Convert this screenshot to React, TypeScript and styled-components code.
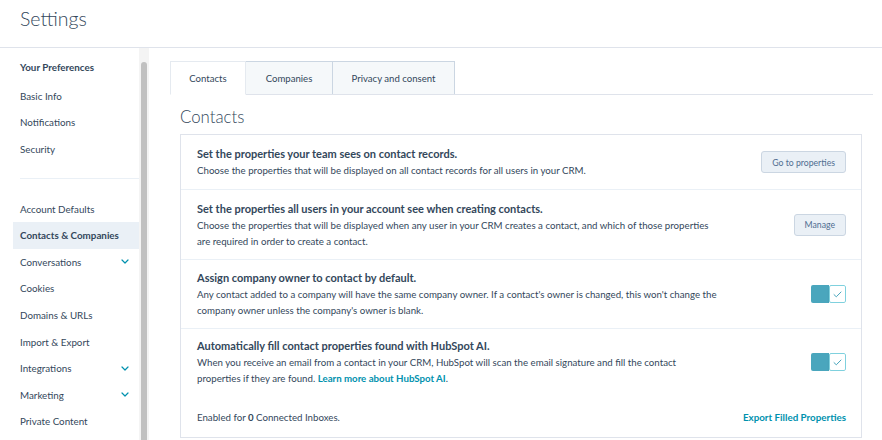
import React from "react";
import styled, { createGlobalStyle } from "styled-components";

const Global = createGlobalStyle`
  html, body { margin: 0; padding: 0; background: #fff; }
  body { font-family: Lato, "Open Sans", sans-serif; color: #33475b; -webkit-font-smoothing: antialiased; }
  * { box-sizing: border-box; }
`;

const Page = styled.div`
  width: 882px;
  height: 440px;
  overflow: hidden;
  display: flex;
  flex-direction: column;
`;

const Header = styled.header`
  height: 48px;
  border-bottom: 1px solid #dfe3eb;
  padding: 6px 0 0 20px;
`;

const Title = styled.h1`
  margin: 0;
  font-size: 19.5px;
  font-weight: 300;
  color: #33475b;
  line-height: 26px;
`;

const Body = styled.div`
  flex: 1;
  display: flex;
  min-height: 0;
`;

const Sidebar = styled.nav`
  width: 139px;
  padding: 6px 0 0 13px;
  display: flex;
  flex-direction: column;
`;

const NavItem = styled.div<{ $active?: boolean; $heading?: boolean }>`
  height: 26.6px;
  flex-shrink: 0;
  display: flex;
  align-items: center;
  justify-content: space-between;
  padding: 0 10px 0 7px;
  font-size: 9.8px;
  font-weight: ${(p) => (p.$active || p.$heading ? 700 : 400)};
  color: #33475b;
  background: ${(p) => (p.$active ? "#eaf0f6" : "transparent")};
  margin-bottom: ${(p) => (p.$heading ? "2px" : "0")};
  white-space: nowrap;
`;

const Divider = styled.div`
  height: 1px;
  flex-shrink: 0;
  background: #eaf0f6;
  margin: 16px 0 16px 7px;
`;

const Chevron = () => (
  <svg width="8" height="5" viewBox="0 0 8 5">
    <path d="M1 1l3 3 3-3" fill="none" stroke="#0091ae" strokeWidth="1.2" strokeLinecap="round" strokeLinejoin="round" />
  </svg>
);

const Scroll = styled.div`
  width: 10px;
  padding: 14px 2px 0;
  background: #f4f4f4;
  display: flex;
`;

const Thumb = styled.div`
  flex: 1;
  background: #c1c1c1;
  border-radius: 3px 3px 0 0;
`;

const Main = styled.main`
  flex: 1;
  padding: 13px 20px 0 21px;
  display: flex;
  flex-direction: column;
`;

const Tabs = styled.div`
  display: flex;
  height: 34px;
  margin-right: -11px;
  border-bottom: 1px solid #dfe3eb;
`;

const Tab = styled.div<{ $active?: boolean; $w: number }>`
  width: ${(p) => p.$w}px;
  display: flex;
  align-items: center;
  justify-content: center;
  font-size: 9.6px;
  color: #33475b;
  background: ${(p) => (p.$active ? "#fff" : "#f5f8fa")};
  border: 1px solid ${(p) => (p.$active ? "#e5eaf0" : "#cbd6e2")};
  border-left-width: ${(p) => (p.$active ? "1px" : "0")};
  border-bottom: ${(p) => (p.$active ? "1px solid #fff" : "none")};
  margin-bottom: ${(p) => (p.$active ? "-1px" : "0")};
`;

const Heading = styled.h2`
  margin: 7px 0 0 10px;
  font-size: 16.8px;
  font-weight: 300;
  color: #33475b;
  height: 30px;
  line-height: 30px;
`;

const Card = styled.div`
  margin: 2px 0 0 10px;
  border: 1px solid #dfe3eb;
  display: flex;
  flex-direction: column;
`;

const Row = styled.div<{ $h: number }>`
  height: ${(p) => p.$h}px;
  display: flex;
  align-items: center;
  justify-content: space-between;
  padding: 0 15px 0 16px;
  border-bottom: 1px solid #eaf0f6;
`;

const RowText = styled.div`
  flex: 0 1 522px;
`;

const RowTitle = styled.div`
  font-size: 11px;
  font-weight: 700;
  line-height: 16px;
  color: #33475b;
`;

const RowDesc = styled.div`
  font-size: 9.7px;
  line-height: 16px;
  color: #33475b;
`;

const Button = styled.button`
  height: 22px;
  padding: 0 10px;
  font-family: inherit;
  font-size: 8.7px;
  color: #506e91;
  background: #eaf0f6;
  border: 1px solid #cbd6e2;
  border-radius: 3px;
`;

const Toggle = styled.div`
  width: 35px;
  height: 18px;
  display: flex;
  border-radius: 2px;
  overflow: hidden;
`;

const ToggleOn = styled.div`
  width: 18px;
  background: #4aa6bd;
`;

const ToggleKnob = styled.div`
  flex: 1;
  background: #fff;
  border: 1px solid #7fd1de;
  border-radius: 2px;
  display: flex;
  align-items: center;
  justify-content: center;
  box-shadow: 0 1px 2px rgba(0,0,0,0.08);
`;

const Check = () => (
  <svg width="9" height="7" viewBox="0 0 9 7">
    <path d="M1 3.6l2.3 2.2L8 1" fill="none" stroke="#4aa6bd" strokeWidth="1" strokeLinecap="round" strokeLinejoin="round" />
  </svg>
);

const Link = styled.a`
  color: #0091ae;
  font-weight: 700;
  text-decoration: none;
`;

const AutoRow = styled.div`
  height: 108px;
  display: flex;
  flex-direction: column;
  padding: 9px 15px 0 16px;
`;

const AutoTop = styled.div`
  display: flex;
  align-items: center;
  justify-content: space-between;
`;

const AutoFooter = styled.div`
  display: flex;
  justify-content: space-between;
  align-items: center;
  margin-top: 25px;
  font-size: 9.7px;
`;

const ExportLink = styled(Link)`
  font-size: 9.8px;
`;

const navItems: { label: string; chevron?: boolean; active?: boolean }[] = [
  { label: "Account Defaults" },
  { label: "Contacts & Companies", active: true },
  { label: "Conversations", chevron: true },
  { label: "Cookies" },
  { label: "Domains & URLs" },
  { label: "Import & Export" },
  { label: "Integrations", chevron: true },
  { label: "Marketing", chevron: true },
  { label: "Private Content" },
];

export default function App() {
  return (
    <Page>
      <Global />
      <Header>
        <Title>Settings</Title>
      </Header>
      <Body>
        <Sidebar>
          <NavItem $heading>Your Preferences</NavItem>
          <NavItem>Basic Info</NavItem>
          <NavItem>Notifications</NavItem>
          <NavItem>Security</NavItem>
          <Divider />
          {navItems.map((n) => (
            <NavItem key={n.label} $active={n.active}>
              {n.label}
              {n.chevron && <Chevron />}
            </NavItem>
          ))}
        </Sidebar>
        <Scroll>
          <Thumb />
        </Scroll>
        <Main>
          <Tabs>
            <Tab $active $w={76}>Contacts</Tab>
            <Tab $w={87}>Companies</Tab>
            <Tab $w={122}>Privacy and consent</Tab>
          </Tabs>
          <Heading>Contacts</Heading>
          <Card>
            <Row $h={55}>
              <RowText>
                <RowTitle>Set the properties your team sees on contact records.</RowTitle>
                <RowDesc>Choose the properties that will be displayed on all contact records for all users in your CRM.</RowDesc>
              </RowText>
              <Button>Go to properties</Button>
            </Row>
            <Row $h={70}>
              <RowText>
                <RowTitle>Set the properties all users in your account see when creating contacts.</RowTitle>
                <RowDesc>
                  Choose the properties that will be displayed when any user in your CRM creates a contact, and which of those properties are required in order to create a contact.
                </RowDesc>
              </RowText>
              <Button>Manage</Button>
            </Row>
            <Row $h={69}>
              <RowText>
                <RowTitle>Assign company owner to contact by default.</RowTitle>
                <RowDesc>
                  Any contact added to a company will have the same company owner. If a contact's owner is changed, this won't change the company owner unless the company's owner is blank.
                </RowDesc>
              </RowText>
              <Toggle>
                <ToggleOn />
                <ToggleKnob><Check /></ToggleKnob>
              </Toggle>
            </Row>
            <AutoRow>
              <AutoTop>
                <RowText>
                  <RowTitle>Automatically fill contact properties found with HubSpot AI.</RowTitle>
                  <RowDesc>
                    When you receive an email from a contact in your CRM, HubSpot will scan the email signature and fill the contact properties if they are found. <Link href="#">Learn more about HubSpot AI</Link>.
                  </RowDesc>
                </RowText>
                <Toggle>
                  <ToggleOn />
                  <ToggleKnob><Check /></ToggleKnob>
                </Toggle>
              </AutoTop>
              <AutoFooter>
                <span>Enabled for <b>0</b> Connected Inboxes.</span>
                <ExportLink href="#">Export Filled Properties</ExportLink>
              </AutoFooter>
            </AutoRow>
          </Card>
        </Main>
      </Body>
    </Page>
  );
}
